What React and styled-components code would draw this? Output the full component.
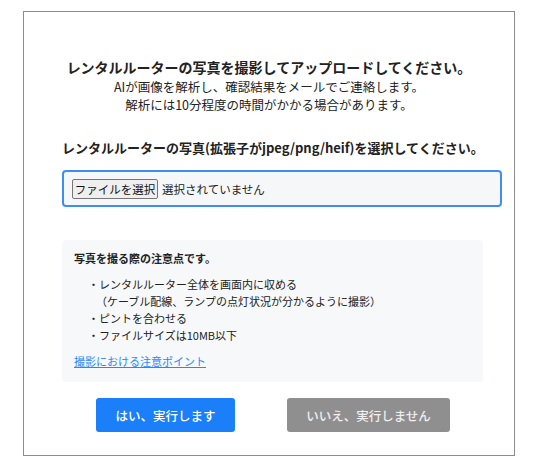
import styled, { createGlobalStyle } from 'styled-components';

const GlobalStyle = createGlobalStyle`
  body {
    margin: 0;
    background: #ffffff;
    font-family: "Noto Sans CJK JP", "Noto Sans", sans-serif;
    color: #222222;
  }
`

const Panel = styled.div`
  box-sizing: border-box;
  width: 492px;
  height: 445px;
  margin: 11px 0 0 23px;
  border: 1px solid #8c8c8c;
  padding: 45px 12px 0 38px;
`

const Title = styled.div`
  margin-left: -26px;
  text-align: center;
  font-size: 14px;
  font-weight: 700;
  line-height: 20px;
`

const Lead = styled.div`
  margin-left: -26px;
  margin-top: 1px;
  text-align: center;
  font-size: 12.5px;
  line-height: 18px;
`

const Label = styled.div`
  margin-top: 25px;
  font-size: 13px;
  font-weight: 700;
  line-height: 18px;
`

const FileBox = styled.div`
  box-sizing: border-box;
  margin-top: 13px;
  height: 37px;
  display: flex;
  align-items: center;
  gap: 4px;
  padding: 0 8px;
  background: #f6f7f9;
  border: 2px solid #3f8cf3;
  border-radius: 4px;
  font-size: 11.5px;
`

const FileButton = styled.div`
  box-sizing: border-box;
  height: 20px;
  width: 86px;
  display: flex;
  align-items: center;
  justify-content: center;
  background: #efefef;
  border: 1px solid #767676;
  border-radius: 2px;
  font-size: 11.5px;
  color: #111;
`

const Notes = styled.div`
  box-sizing: border-box;
  margin-top: 33px;
  width: 421px;
  height: 142px;
  background: #f7f8fa;
  border-radius: 4px;
  padding: 10px 12px 0 12px;
  font-size: 11px;
`

const NotesTitle = styled.div`
  font-weight: 700;
  line-height: 16px;
`

const List = styled.div`
  margin-top: 10px;
  padding-left: 14px;
  line-height: 17px;
`

const Item = styled.div`
  padding-left: ${p => (p.$sub ? '8px' : '0')};
`

const Link = styled.a`
  display: block;
  margin-top: 9px;
  color: #1e8bff;
  text-decoration: underline;
  line-height: 17px;
`

const Actions = styled.div`
  margin-top: 16px;
  margin-left: -38px;
  padding-left: 72px;
  display: flex;
  gap: 52px;
`

const Button = styled.div`
  box-sizing: border-box;
  height: 34px;
  width: ${p => p.$w}px;
  display: flex;
  align-items: center;
  justify-content: center;
  border-radius: 3px;
  background: ${p => (p.$primary ? '#1a7ff8' : '#8f8f8f')};
  color: ${p => (p.$primary ? '#ffffff' : '#f0f0f0')};
  font-size: 12.5px;
  font-weight: 500;
`

function App() {
  return (
    <>
      <GlobalStyle />
      <Panel>
        <Title>レンタルルーターの写真を撮影してアップロードしてください。</Title>
        <Lead>
          AIが画像を解析し、確認結果をメールでご連絡します。
          <br />
          解析には10分程度の時間がかかる場合があります。
        </Lead>
        <Label>レンタルルーターの写真(拡張子がjpeg/png/heif)を選択してください。</Label>
        <FileBox>
          <FileButton>ファイルを選択</FileButton>
          <span>選択されていません</span>
        </FileBox>
        <Notes>
          <NotesTitle>写真を撮る際の注意点です。</NotesTitle>
          <List>
            <Item>・レンタルルーター全体を画面内に収める</Item>
            <Item $sub>（ケーブル配線、ランプの点灯状況が分かるように撮影）</Item>
            <Item>・ピントを合わせる</Item>
            <Item>・ファイルサイズは10MB以下</Item>
          </List>
          <Link href="#">撮影における注意ポイント</Link>
        </Notes>
        <Actions>
          <Button $primary $w={139}>はい、実行します</Button>
          <Button $w={163}>いいえ、実行しません</Button>
        </Actions>
      </Panel>
    </>
  );
}

export default App;
